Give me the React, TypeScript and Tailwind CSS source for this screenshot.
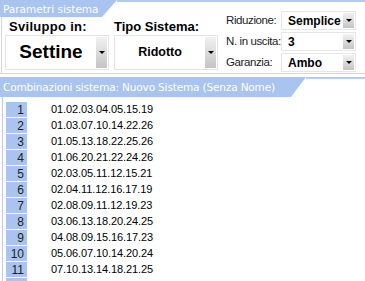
import { ReactNode } from 'react'

const combos = [
  '01.02.03.04.05.15.19',
  '01.03.07.10.14.22.26',
  '01.05.13.18.22.25.26',
  '01.06.20.21.22.24.26',
  '02.03.05.11.12.15.21',
  '02.04.11.12.16.17.19',
  '02.08.09.11.12.19.23',
  '03.06.13.18.20.24.25',
  '04.08.09.15.16.17.23',
  '05.06.07.10.14.20.24',
  '07.10.13.14.18.21.25',
]

function DropButton({ className = '' }: { className?: string }) {
  return (
    <div className={`flex items-center justify-center bg-gradient-to-b from-[#f2f2f2] to-[#c4c4c4] ${className}`}>
      <div className="w-0 h-0 border-l-[3px] border-r-[3px] border-t-[3px] border-l-transparent border-r-transparent border-t-black" />
    </div>
  )
}

function Tab({ children, className = '' }: { children: ReactNode; className?: string }) {
  return (
    <div
      className={`h-full bg-[#a9c4ee] text-white font-['DejaVu_Sans',sans-serif] text-[10.5px] leading-none flex items-center pl-[3px] pt-[1px] whitespace-nowrap [clip-path:polygon(0_0,100%_0,calc(100%-15px)_100%,0_100%)] ${className}`}
    >
      {children}
    </div>
  )
}

function BigSelect({ value, big }: { value: string; big?: boolean }) {
  return (
    <div className="flex h-[35px] w-[104px] border border-[#e4e4e4] bg-white">
      <div
        className={`flex-1 flex items-center justify-center font-bold font-['Liberation_Sans',Arial,sans-serif] text-black ${
          big ? 'text-[19px]' : 'text-[12.5px]'
        }`}
      >
        {value}
      </div>
      <DropButton className="w-[11px] my-[1px] mr-[1px]" />
    </div>
  )
}

function SmallSelect({ label, value }: { label: string; value: string }) {
  return (
    <div className="flex items-center h-[19px]">
      <div className="w-[57px] pl-[2px] text-[11.5px] tracking-[-0.4px] text-[#222] font-['Liberation_Sans',Arial,sans-serif]">
        {label}
      </div>
      <div className="flex h-full w-[75px] border border-[#e6e6e6] bg-white">
        <div className="flex-1 flex items-center pl-[6px] font-bold text-[12px] font-['Liberation_Sans',Arial,sans-serif] text-black">
          {value}
        </div>
        <DropButton className="w-[11px] my-[1px] mr-[1px]" />
      </div>
    </div>
  )
}

export default function App() {
  return (
    <div className="w-[365px] h-[281px] overflow-hidden bg-white flex flex-col">
      {/* Parametri sistema */}
      <div className="flex h-[74px] border-b border-[#d6d6d6] shrink-0">
        <div className="w-[222px] flex flex-col">
          <div className="flex h-[17px] shrink-0">
            <Tab className="w-[117px]">Parametri sistema</Tab>
            <div className="flex-1 border-t-2 border-[#b4ccf0]" />
          </div>
          <div className="flex-1 flex gap-[5px] border-l border-[#d6d6d6] ml-[1px] pl-[3px]">
            <div className="flex flex-col">
              <div className="h-[18px] pl-[4px] pt-[3px] font-bold text-[13px] leading-none font-['Liberation_Sans',Arial,sans-serif] tracking-[0.3px]">
                Sviluppo in:
              </div>
              <BigSelect value="Settine" big />
            </div>
            <div className="flex flex-col">
              <div className="h-[18px] pt-[3px] font-bold text-[13px] leading-none font-['Liberation_Sans',Arial,sans-serif]">
                Tipo Sistema:
              </div>
              <BigSelect value="Ridotto" />
            </div>
          </div>
        </div>
        <div className="flex-1 border-t-2 border-[#b4ccf0] pt-[9px] pl-[2px] flex flex-col gap-[2px]">
          <SmallSelect label="Riduzione:" value="Semplice" />
          <SmallSelect label="N. in uscita:" value="3" />
          <SmallSelect label="Garanzia:" value="Ambo" />
        </div>
      </div>

      {/* Combinazioni */}
      <div className="flex h-[20px] mt-[3px] shrink-0">
        <Tab className="w-[306px] tracking-[-0.15px]">Combinazioni sistema: Nuovo Sistema (Senza Nome)</Tab>
        <div className="flex-1 border-t-2 border-[#b4ccf0]" />
      </div>
      <div className="flex-1 ml-[2px] border-l border-[#bfcbe0] pt-[5px] flex flex-col gap-[1px]">
        {combos.map((c, i) => (
          <div key={i} className="flex items-center h-[15px] shrink-0 font-['Liberation_Sans',Arial,sans-serif]">
            <div className="ml-[3px] w-[21px] h-full bg-[#a9c4ee] text-[12px] text-[#222] flex items-center justify-end pr-[3px]">
              {i + 1}
            </div>
            <div className="ml-[24px] text-[11px] text-black tracking-[-0.1px]">{c}</div>
          </div>
        ))}
        {/* next row, only its top edge shows */}
        <div className="ml-[3px] w-[21px] h-[15px] shrink-0 bg-[#a9c4ee]" />
      </div>
    </div>
  )
}
